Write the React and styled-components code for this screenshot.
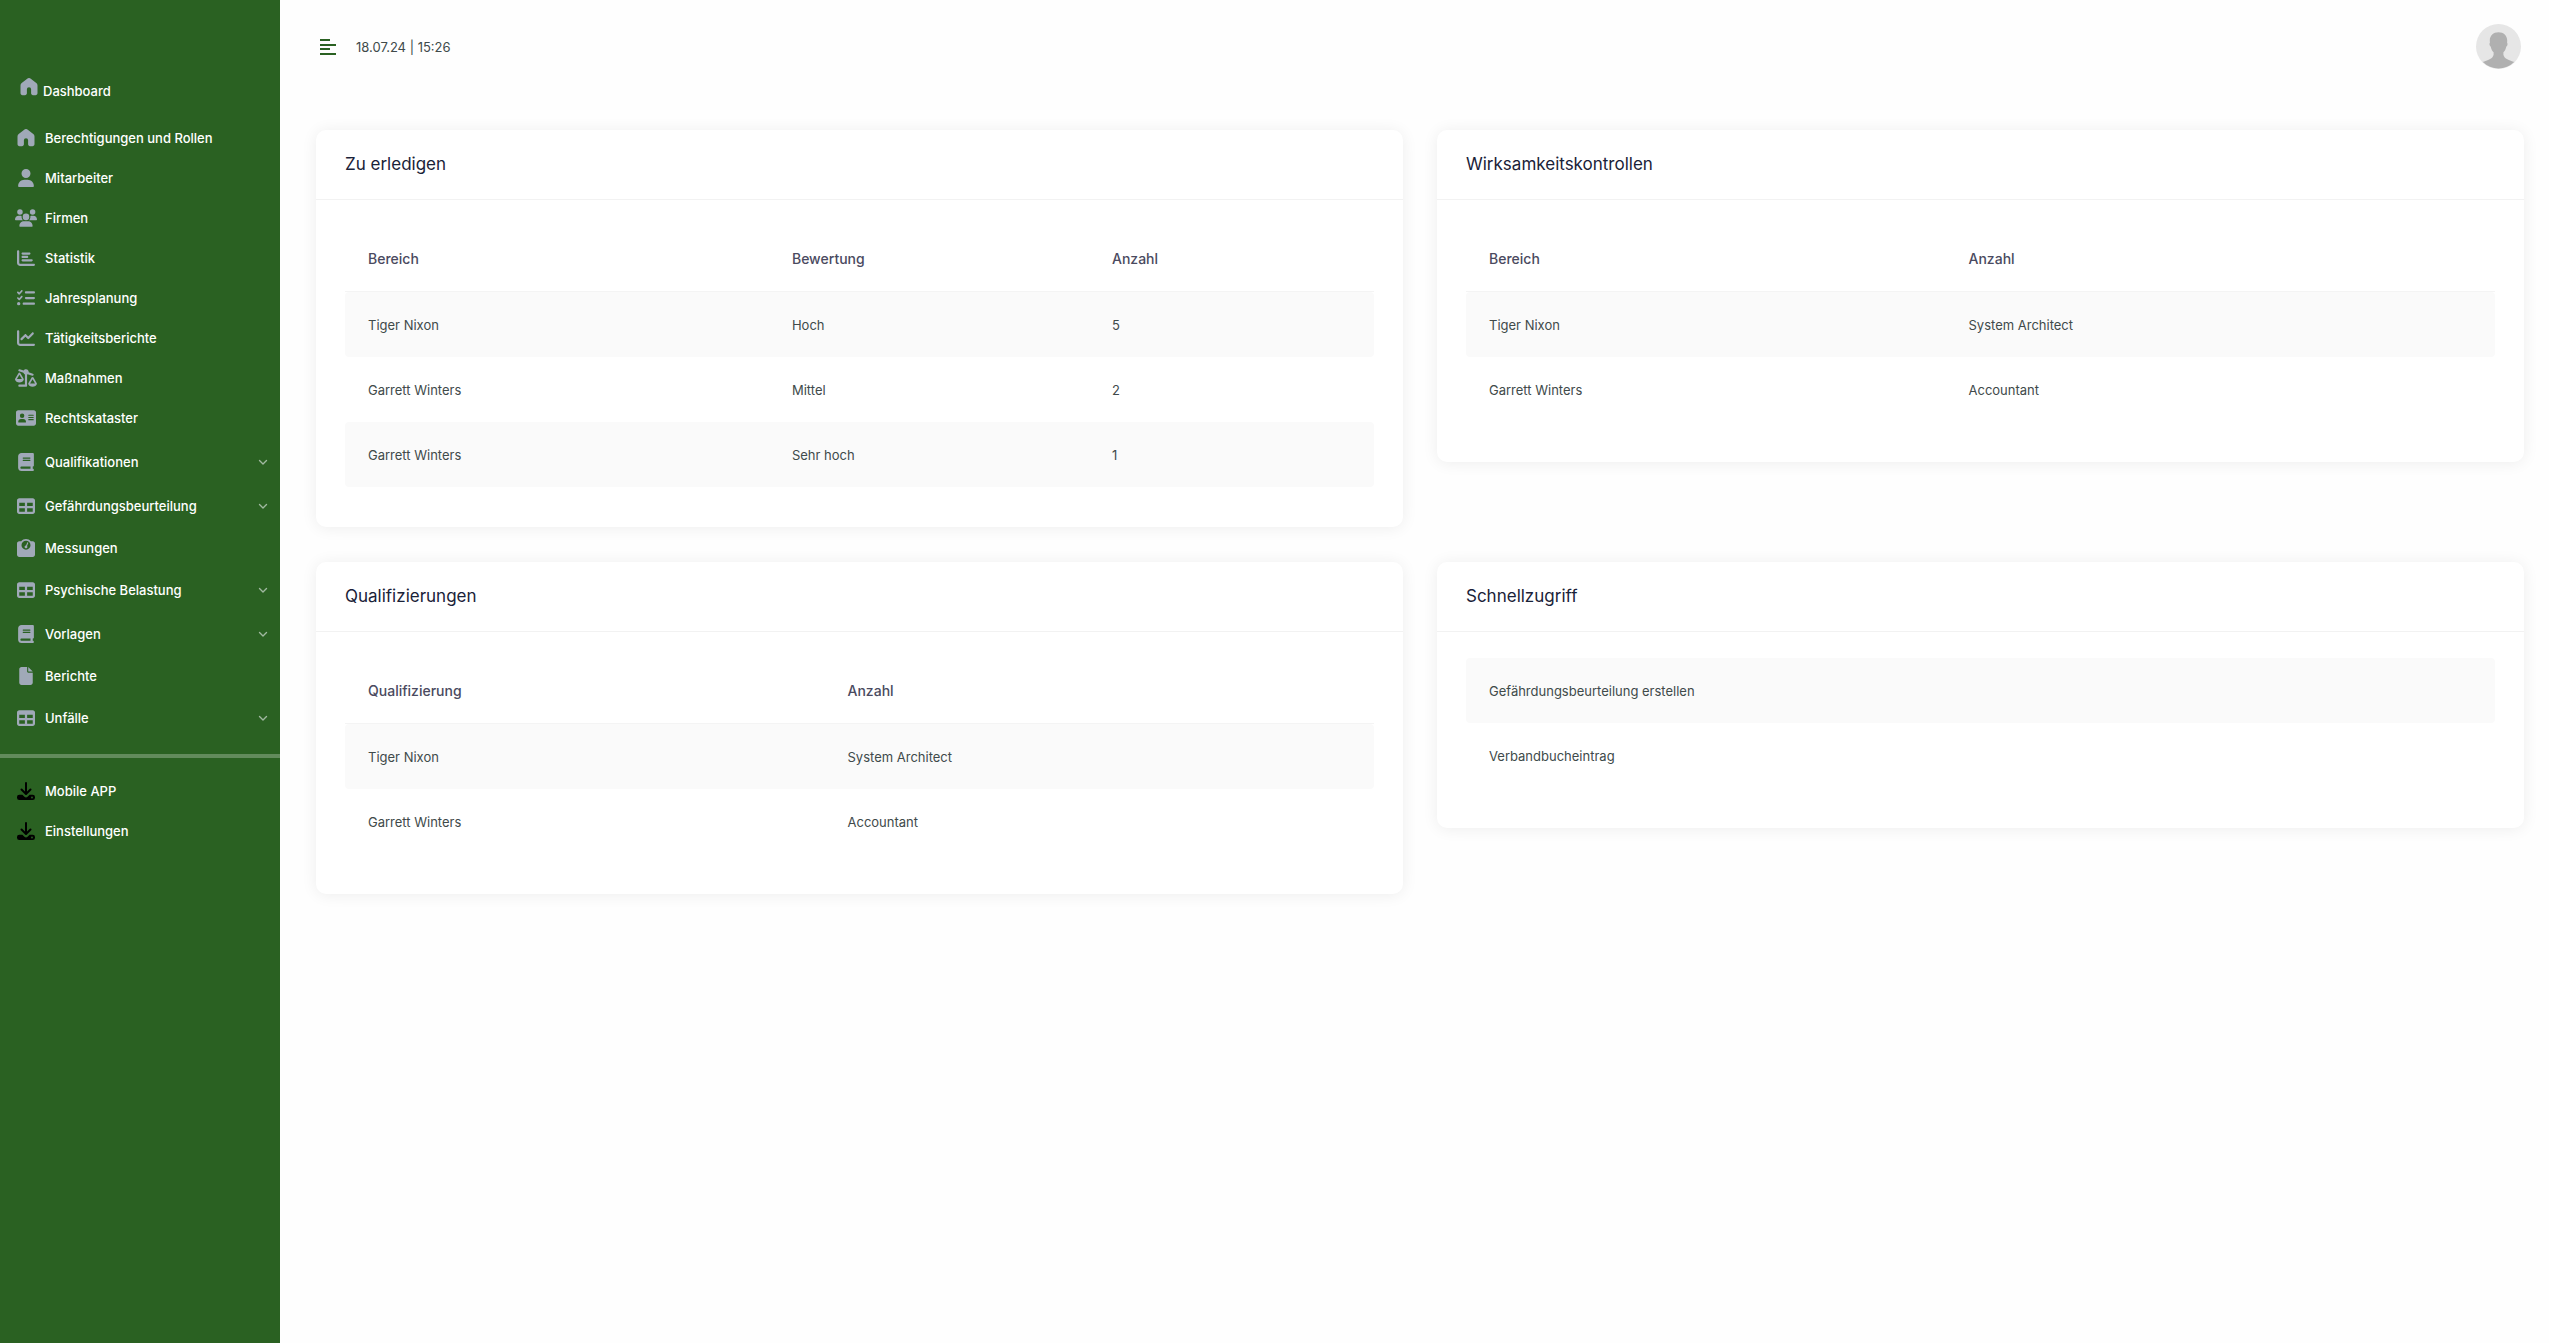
import { createGlobalStyle, styled } from 'styled-components';
import {
  FaAddressCard,
  FaBook,
  FaChartBar,
  FaChartLine,
  FaFile,
  FaListCheck,
  FaScaleUnbalancedFlip,
  FaTable,
  FaUser,
  FaUsers,
  FaWeightScale,
} from 'react-icons/fa6';

const HouseIcon = () => (
  <svg width="18" height="18" viewBox="0 0 18 18" fill="currentColor">
    <path d="M6.9 1a3.2 3.2 0 0 1 4.2 0l5.2 4c.8.6 1.2 1.4 1.2 2.4v7.6c0 1.3-.8 2.2-2 2.2h-2.500c-1.100 0-1.900-.8-1.900-1.900v-4a2.100 2.100 0 0 0-4.200 0v4c0 1.100-.8 1.900-1.900 1.900H2.500c-1.200 0-2-.9-2-2.200V7.400c0-1 .4-1.800 1.200-2.400z" />
  </svg>
);

const DownloadIcon = () => (
  <svg width="18" height="18" viewBox="0 0 18 18">
    <path
      d="M9 1v10.500M4.500 7.500L9 12l4.500-4.500"
      fill="none"
      stroke="currentColor"
      strokeWidth="2"
      strokeLinecap="round"
      strokeLinejoin="round"
    />
    <path
      fill="currentColor"
      fillRule="evenodd"
      d="M2.300 12.800h3.100l2 1.900a2.300 2.300 0 0 0 3.200 0l2-1.900h3.100a2.300 2.300 0 0 1 2.300 2.300v.6a2.300 2.300 0 0 1-2.300 2.300H2.300A2.300 2.300 0 0 1 0 15.700v-.6a2.300 2.300 0 0 1 2.300-2.300zm12.700 1.800a.9.9 0 1 0 0 1.800.9.9 0 0 0 0-1.800z"
    />
  </svg>
);

const ChevronIcon = () => (
  <svg width="10" height="10" viewBox="0 0 10 10">
    <path
      d="M1.500 3.500L5 7l3.500-3.500"
      fill="none"
      stroke="currentColor"
      strokeWidth="1.400"
      strokeLinecap="round"
      strokeLinejoin="round"
    />
  </svg>
);

const MenuIcon = () => (
  <svg width="16" height="17" viewBox="0 0 16 17" fill="currentColor">
    <rect width="10" height="2" y="1" />
    <rect width="16" height="2" y="6" />
    <rect width="10" height="2" y="10" />
    <rect width="16" height="2" y="15" />
  </svg>
);

const AvatarIcon = () => (
  <svg width="45" height="45" viewBox="0 0 45 45">
    <circle cx="22.500" cy="22.500" r="22.500" fill="#e6e6e6" />
    <path
      fill="#b0b0b0"
      d="M22.500 8.200c5.200 0 8.700 3.300 8.700 8.300l-.1 2.500c.6.300.5 1.500.1 2.400-.2.500-.5.900-.9 1-.5 2.600-1.500 4.500-2.900 5.800v2.600c.8 3.900 4.800 5 10.800 7.200A22.500 22.500 0 0 1 6.800 38c6-2.200 10-3.300 10.800-7.200v-2.600c-1.400-1.300-2.400-3.200-2.900-5.800-.4-.1-.7-.5-.9-1-.4-.9-.5-2.100.1-2.400l-.1-2.500c0-5 3.500-8.300 8.700-8.300z"
    />
  </svg>
);

const MAIN_LINKS = [
  { label: 'Berechtigungen und Rollen', icon: <HouseIcon /> },
  { label: 'Mitarbeiter', icon: <FaUser size={18} /> },
  { label: 'Firmen', icon: <FaUsers size={22} /> },
  { label: 'Statistik', icon: <FaChartBar size={18} /> },
  { label: 'Jahresplanung', icon: <FaListCheck size={18} /> },
  { label: 'Tätigkeitsberichte', icon: <FaChartLine size={18} /> },
  { label: 'Maßnahmen', icon: <FaScaleUnbalancedFlip size={22} /> },
  { label: 'Rechtskataster', icon: <FaAddressCard size={20} /> },
];

const MODULE_LINKS = [
  { label: 'Qualifikationen', icon: <FaBook size={18} />, hasMenu: true },
  { label: 'Gefährdungsbeurteilung', icon: <FaTable size={18} />, hasMenu: true },
  { label: 'Messungen', icon: <FaWeightScale size={18} /> },
  { label: 'Psychische Belastung', icon: <FaTable size={18} />, hasMenu: true },
  { label: 'Vorlagen', icon: <FaBook size={18} />, hasMenu: true },
  { label: 'Berichte', icon: <FaFile size={18} /> },
  { label: 'Unfälle', icon: <FaTable size={18} />, hasMenu: true },
];

const EXTRA_LINKS = [
  { label: 'Mobile APP', icon: <DownloadIcon />, dark: true },
  { label: 'Einstellungen', icon: <DownloadIcon />, dark: true },
];

const CARDS = [
  {
    title: 'Zu erledigen',
    columns: [
      { label: 'Bereich', width: '41.2%' },
      { label: 'Bewertung', width: '31.1%' },
      { label: 'Anzahl' },
    ],
    rows: [
      ['Tiger Nixon', 'Hoch', '5'],
      ['Garrett Winters', 'Mittel', '2'],
      ['Garrett Winters', 'Sehr hoch', '1'],
    ],
  },
  {
    title: 'Wirksamkeitskontrollen',
    columns: [{ label: 'Bereich', width: '46.6%' }, { label: 'Anzahl' }],
    rows: [
      ['Tiger Nixon', 'System Architect'],
      ['Garrett Winters', 'Accountant'],
    ],
  },
  {
    title: 'Qualifizierungen',
    columns: [{ label: 'Qualifizierung', width: '46.6%' }, { label: 'Anzahl' }],
    rows: [
      ['Tiger Nixon', 'System Architect'],
      ['Garrett Winters', 'Accountant'],
    ],
  },
  {
    title: 'Schnellzugriff',
    rows: [['Gefährdungsbeurteilung erstellen'], ['Verbandbucheintrag']],
  },
];

const NavGroup = ({ links }) => (
  <NavList>
    {links.map(({ label, icon, hasMenu, dark }) => (
      <li key={label}>
        <NavLink href="#" $tall={hasMenu}>
          <NavIcon $dark={dark}>{icon}</NavIcon>
          <NavLabel>{label}</NavLabel>
          {hasMenu && (
            <Chevron>
              <ChevronIcon />
            </Chevron>
          )}
        </NavLink>
      </li>
    ))}
  </NavList>
);

const TableCard = ({ title, columns, rows }) => (
  <Card>
    <CardTitle>{title}</CardTitle>
    <CardBody>
      <Table>
        {columns && (
          <thead>
            <tr>
              {columns.map(({ label, width }) => (
                <HeadCell key={label} scope="col" $width={width}>
                  {label}
                </HeadCell>
              ))}
            </tr>
          </thead>
        )}
        <tbody>
          {rows.map((row, idx) => (
            <Row key={idx}>
              {row.map(value => (
                <Cell key={value}>{value}</Cell>
              ))}
            </Row>
          ))}
        </tbody>
      </Table>
    </CardBody>
  </Card>
);

const App = () => {
  return (
    <>
      <GlobalStyle />
      <Layout>
        <Sidebar>
          <Brand href="#">
            <BrandIcon>
              <HouseIcon />
            </BrandIcon>
            Dashboard
          </Brand>
          <Groups>
            <NavGroup links={MAIN_LINKS} />
            <NavGroup links={MODULE_LINKS} />
          </Groups>
          <Divider />
          <NavGroup links={EXTRA_LINKS} />
        </Sidebar>
        <Main>
          <Header>
            <MenuButton aria-label="Menü">
              <MenuIcon />
            </MenuButton>
            <DateText>18.07.24 | 15:26</DateText>
            <ProfileButton aria-label="Profil">
              <AvatarIcon />
            </ProfileButton>
          </Header>
          <Cards>
            {CARDS.map(card => (
              <TableCard key={card.title} {...card} />
            ))}
          </Cards>
        </Main>
      </Layout>
    </>
  );
};

export default App;

const GlobalStyle = createGlobalStyle`
  * {
    box-sizing: border-box;
  }
  body {
    margin: 0;
    background-color: #fefefe;
    font-family: Inter, 'Liberation Sans', sans-serif;
    font-size: 13px;
    color: #404a4a;
  }
  a {
    color: inherit;
    text-decoration: none;
  }
  button {
    padding: 0;
    border: 0;
    background: none;
    cursor: pointer;
  }
  svg {
    display: block;
  }
`;

const Layout = styled.div`
  display: flex;
  min-height: 100vh;
`;

const Sidebar = styled.nav`
  flex: none;
  width: 280px;
  padding-top: 78px;
  background-color: #2a6122;
  color: white;
  font-weight: 500;
`;

const Brand = styled.a`
  display: flex;
  align-items: flex-end;
  gap: 5px;
  height: 23px;
  padding-left: 20px;
  margin-bottom: 17px;
  line-height: 20px;
`;

const BrandIcon = styled.span`
  align-self: flex-start;
  color: #a0a9b8;
`;

const Groups = styled.div`
  display: flex;
  flex-direction: column;
  gap: 2px;
`;

const NavList = styled.ul`
  margin: 0;
  padding: 0;
  list-style: none;
`;

const NavLink = styled.a`
  display: flex;
  align-items: center;
  gap: 8px;
  height: ${props => (props.$tall ? '44px' : '40px')};
  padding: 0 12px 0 15px;
`;

const NavIcon = styled.span`
  display: flex;
  justify-content: center;
  width: 22px;
  color: ${props => (props.$dark ? 'black' : '#a0a9b8')};
`;

const NavLabel = styled.span`
  flex: 1;
`;

const Chevron = styled.span`
  color: #a0b8a0;
`;

const Divider = styled.hr`
  height: 4px;
  margin: 14px 0 13px;
  border: 0;
  background-color: #628b5c;
`;

const Main = styled.main`
  flex: 1;
  min-width: 0;
  padding: 0 25px 40px 36px;
`;

const Header = styled.header`
  display: flex;
  align-items: center;
  gap: 20px;
  height: 93px;
  margin-bottom: 37px;
  padding: 0 3px 0 4px;
`;

const MenuButton = styled.button`
  color: #2a6122;
`;

const DateText = styled.div`
  flex: 1;
`;

const ProfileButton = styled.button`
  border-radius: 50%;
`;

const Cards = styled.div`
  display: grid;
  grid-template-columns: 1fr 1fr;
  align-items: start;
  gap: 35px 34px;
`;

const Card = styled.section`
  border-radius: 10px;
  background-color: white;
  box-shadow: 0 1px 16px rgba(0, 0, 0, 0.07);
`;

const CardTitle = styled.h2`
  margin: 0;
  padding: 22px 29px;
  border-bottom: 1px solid #f2f2f2;
  font-size: 17px;
  font-weight: 400;
  line-height: 25px;
  color: #1a2238;
`;

const CardBody = styled.div`
  padding: 26px 29px 40px;
`;

const Table = styled.table`
  width: 100%;
  border-spacing: 0;
`;

const HeadCell = styled.th`
  width: ${props => props.$width || 'auto'};
  height: 66px;
  padding: 0 23px;
  border-bottom: 1px solid #f4f4f4;
  font-size: 14px;
  font-weight: 500;
  text-align: left;
  color: #4a4a60;
`;

const Row = styled.tr`
  &:nth-child(odd) td {
    background-color: #fafafa;
  }
`;

const Cell = styled.td`
  height: 65px;
  padding: 0 23px;
  &:first-child {
    border-radius: 4px 0 0 4px;
  }
  &:last-child {
    border-radius: 0 4px 4px 0;
  }
  &:only-child {
    border-radius: 4px;
  }
`;
